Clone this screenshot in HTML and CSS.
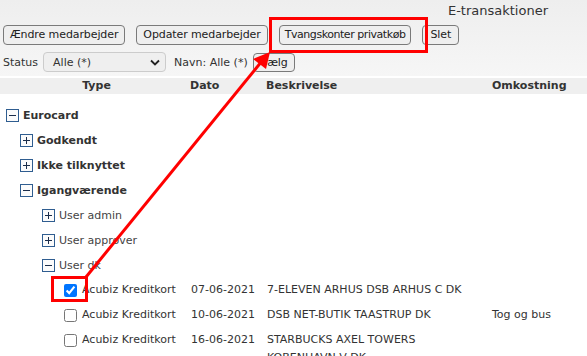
FILE: index.html
```html
<!DOCTYPE html>
<html lang="da">
<head>
<meta charset="utf-8">
<title>E-transaktioner</title>
<link rel="stylesheet" href="styles.css">
</head>
<body>
<div class="page">
  <div class="titlebar"><span class="title">E-transaktioner</span></div>
  <div class="actions">
    <button class="btn">Ændre medarbejder</button>
    <button class="btn">Opdater medarbejder</button>
    <button class="btn tight">Tvangskonter privatkøb</button>
    <button class="btn wide">Slet</button>
  </div>
  <div class="filters">
    <span class="lbl">Status</span>
    <div class="select"><span>Alle (*)</span>
      <svg class="chev" width="10" height="7" viewBox="0 0 10 7"><path d="M1 1.5 L5 5.5 L9 1.5" fill="none" stroke="#222" stroke-width="1.8"/></svg>
    </div>
    <span class="lbl navn">Navn: Alle (*)</span>
    <button class="btn vaelg">Vælg</button>
  </div>
  <div class="cols head">
    <div class="c-type">Type</div>
    <div class="c-date">Dato</div>
    <div class="c-desc">Beskrivelse</div>
    <div class="c-cost">Omkostning</div>
  </div>
  <div class="tree">
    <div class="node l1 grp">
      <svg class="tog" width="13" height="13" viewBox="0 0 13 13"><rect x="0.5" y="0.5" width="12" height="12" fill="#fbfbfb" stroke="#2f5d90"/><path d="M3 6.5 H10" stroke="#1b2d4a" stroke-width="1"/></svg>
      <span>Eurocard</span>
    </div>
    <div class="node l2 grp">
      <svg class="tog" width="13" height="13" viewBox="0 0 13 13"><rect x="0.5" y="0.5" width="12" height="12" fill="#fbfbfb" stroke="#2f5d90"/><path d="M3 6.5 H10 M6.5 3 V10" stroke="#1b2d4a" stroke-width="1"/></svg>
      <span>Godkendt</span>
    </div>
    <div class="node l2 grp">
      <svg class="tog" width="13" height="13" viewBox="0 0 13 13"><rect x="0.5" y="0.5" width="12" height="12" fill="#fbfbfb" stroke="#2f5d90"/><path d="M3 6.5 H10 M6.5 3 V10" stroke="#1b2d4a" stroke-width="1"/></svg>
      <span>Ikke tilknyttet</span>
    </div>
    <div class="node l2 grp">
      <svg class="tog" width="13" height="13" viewBox="0 0 13 13"><rect x="0.5" y="0.5" width="12" height="12" fill="#fbfbfb" stroke="#2f5d90"/><path d="M3 6.5 H10" stroke="#1b2d4a" stroke-width="1"/></svg>
      <span>Igangværende</span>
    </div>
    <div class="node l3">
      <svg class="tog" width="13" height="13" viewBox="0 0 13 13"><rect x="0.5" y="0.5" width="12" height="12" fill="#fbfbfb" stroke="#2f5d90"/><path d="M3 6.5 H10 M6.5 3 V10" stroke="#1b2d4a" stroke-width="1"/></svg>
      <span>User admin</span>
    </div>
    <div class="node l3">
      <svg class="tog" width="13" height="13" viewBox="0 0 13 13"><rect x="0.5" y="0.5" width="12" height="12" fill="#fbfbfb" stroke="#2f5d90"/><path d="M3 6.5 H10 M6.5 3 V10" stroke="#1b2d4a" stroke-width="1"/></svg>
      <span>User approver</span>
    </div>
    <div class="node l3">
      <svg class="tog" width="13" height="13" viewBox="0 0 13 13"><rect x="0.5" y="0.5" width="12" height="12" fill="#fbfbfb" stroke="#2f5d90"/><path d="M3 6.5 H10" stroke="#1b2d4a" stroke-width="1"/></svg>
      <span>User dk</span>
    </div>
    <div class="cols row">
      <div class="c-type item"><input type="checkbox" class="cb" checked><span>Acubiz Kreditkort</span></div>
      <div class="c-date">07-06-2021</div>
      <div class="c-desc">7-ELEVEN ARHUS DSB ARHUS C DK</div>
      <div class="c-cost"></div>
    </div>
    <div class="cols row">
      <div class="c-type item"><input type="checkbox" class="cb"><span>Acubiz Kreditkort</span></div>
      <div class="c-date">10-06-2021</div>
      <div class="c-desc">DSB NET-BUTIK TAASTRUP DK</div>
      <div class="c-cost">Tog og bus</div>
    </div>
    <div class="cols row">
      <div class="c-type item"><input type="checkbox" class="cb"><span>Acubiz Kreditkort</span></div>
      <div class="c-date">16-06-2021</div>
      <div class="c-desc">STARBUCKS AXEL TOWERS KOBENHAVN V DK</div>
      <div class="c-cost"></div>
    </div>
  </div>

  <div class="mark mark-btn"></div>
  <div class="mark mark-cb"></div>
  <svg class="arrow" width="587" height="356" viewBox="0 0 587 356">
    <line x1="86" y1="277" x2="262" y2="61" stroke="#ff0000" stroke-width="3"/>
    <polygon points="270,52 266,69 253,59" fill="#ff0000"/>
  </svg>
</div>
</body>
</html>
```

FILE: styles.css
```css
html, body {
  margin: 0;
  padding: 0;
}
body {
  width: 587px;
  height: 356px;
  overflow: hidden;
  background: #ffffff;
  font-family: "DejaVu Sans", Verdana, sans-serif;
  font-size: 11px;
  color: #333333;
}
.page {
  position: relative;
  width: 587px;
  height: 356px;
  background: linear-gradient(to bottom, #eeeeee 0px, #f6f6f6 76px, #ffffff 76px, #ffffff 100%);
}
.titlebar {
  display: flex;
  justify-content: flex-end;
  padding: 3px 39px 0 0;
  height: 19px;
  box-sizing: border-box;
}
.title {
  font-size: 13px;
  line-height: 16px;
  color: #333333;
}
.actions {
  display: flex;
  gap: 11px;
  padding: 6px 3px 0;
}
.btn {
  font-family: "DejaVu Sans", Verdana, sans-serif;
  font-size: 11px;
  letter-spacing: -0.1px;
  color: #222222;
  height: 20px;
  padding: 0 6px;
  border: 1px solid #7a7a7a;
  border-radius: 4px;
  background: #efefef;
  line-height: 18px;
  margin: 0;
}
.btn.tight {
  letter-spacing: -0.45px;
  padding: 0 5px;
}
.btn.wide {
  padding: 0 7px;
}
.filters {
  display: flex;
  align-items: center;
  padding: 7px 3px 0;
  height: 20px;
}
.lbl {
  color: #333333;
}
.select {
  margin-left: 5px;
  width: 123px;
  height: 20px;
  box-sizing: border-box;
  border: 1px solid #cccccc;
  border-radius: 4px;
  background: #efefef;
  display: flex;
  align-items: center;
  justify-content: space-between;
  padding: 0 5px 0 9px;
  color: #333333;
}
.navn {
  margin-left: 8px;
}
.vaelg {
  margin-left: 5px;
  height: 19px;
  line-height: 17px;
  padding: 0 6px;
}
.cols {
  display: grid;
  grid-template-columns: 187px 76px 226px 95px;
  padding-left: 3px;
}
.head {
  margin-top: 6px;
  height: 16px;
  line-height: 16px;
  font-weight: bold;
  color: #333333;
  background: #efefef;
}
.head .c-type {
  text-align: center;
}
.tree {
  padding-top: 9px;
}
.node {
  display: flex;
  align-items: center;
  height: 25px;
}
.node .tog {
  flex: none;
  margin-right: 4px;
}
.l1 { padding-left: 6px; }
.l2 { padding-left: 20px; }
.l3 { padding-left: 42px; color: #444444; }
.grp {
  font-weight: bold;
  color: #333333;
}
.row {
  min-height: 25px;
  line-height: 18px;
  align-items: start;
  color: #333333;
}
.row > div {
  padding-top: 3px;
}
.row .c-date { padding-left: 1px; }
.row .c-desc { padding-left: 1px; padding-right: 20px; }
.item {
  display: flex;
  align-items: center;
  padding-left: 61px;
}
.item.c-type { padding-top: 3px; }
.cb {
  width: 13px;
  height: 13px;
  margin: 0 5px 0 0;
}
.mark {
  position: absolute;
  border: 3px solid #ff0000;
  box-sizing: border-box;
}
.mark-btn {
  left: 269px;
  top: 17px;
  width: 159px;
  height: 36px;
}
.mark-cb {
  left: 51px;
  top: 276px;
  width: 37px;
  height: 26px;
}
.arrow {
  position: absolute;
  left: 0;
  top: 0;
  pointer-events: none;
}
```
